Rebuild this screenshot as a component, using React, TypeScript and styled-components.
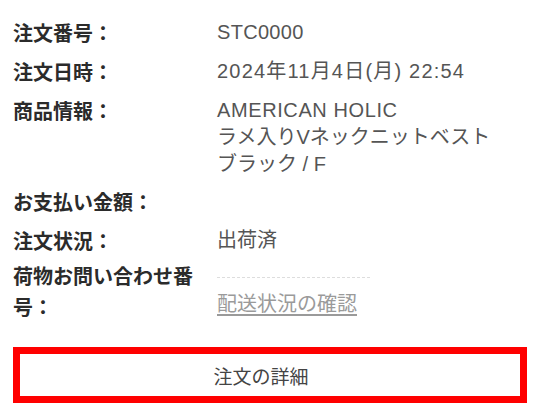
import * as React from "react";
import styled, { createGlobalStyle } from "styled-components";

const GlobalStyle = createGlobalStyle`
  html, body {
    margin: 0;
    padding: 0;
    background: #ffffff;
  }
  body {
    font-family: "Liberation Sans", "Noto Sans CJK JP", sans-serif;
  }
`;

interface LineData {
  text: string;
  spacing?: number;
}

interface Row {
  label: string;
  lines: LineData[];
}

const rows: Row[] = [
  { label: "注文番号：", lines: [{ text: "STC0000", spacing: 0.3 }] },
  { label: "注文日時：", lines: [{ text: "2024年11月4日(月) 22:54", spacing: 1.2 }] },
  {
    label: "商品情報：",
    lines: [
      { text: "AMERICAN HOLIC", spacing: 0.6 },
      { text: "ラメ入りVネックニットベスト" },
      { text: "ブラック / F" },
    ],
  },
  { label: "お支払い金額：", lines: [{ text: "" }] },
  { label: "注文状況：", lines: [{ text: "出荷済" }] },
];

const App: React.FC = () => {
  return (
    <>
      <GlobalStyle />
      <Page>
        <InfoList>
          {rows.map((row) => (
            <InfoRow key={row.label}>
              <Label>{row.label}</Label>
              <Value>
                {row.lines.map((line, i) => (
                  <Line key={i} $spacing={line.spacing ?? 0}>
                    {line.text}
                  </Line>
                ))}
              </Value>
            </InfoRow>
          ))}
          <InfoRow $pull={4}>
            <Label>荷物お問い合わせ番号：</Label>
            <Value>
              <Masked />
              <TrackLink href="#">配送状況の確認</TrackLink>
            </Value>
          </InfoRow>
        </InfoList>
        <DetailButton type="button">注文の詳細</DetailButton>
      </Page>
    </>
  );
};

export default App;

const Page = styled.div`
  width: 533px;
  height: 410px;
  box-sizing: border-box;
  padding: 17px 6px 0 13px;
  display: flex;
  flex-direction: column;
  overflow: hidden;
`;

const InfoList = styled.dl`
  margin: 0;
  display: flex;
  flex-direction: column;
  gap: 8px;
`;

const InfoRow = styled.div<{ $pull?: number }>`
  display: grid;
  grid-template-columns: 204px 1fr;
  align-items: start;
  margin-top: ${({ $pull }) => ($pull ? -$pull : 0)}px;
`;

const Label = styled.dt`
  margin: 0;
  width: 184px;
  font-size: 20px;
  line-height: 31px;
  font-weight: bold;
  color: #2b2b2b;
  font-family: "Noto Sans CJK JP", sans-serif;
`;

const Value = styled.dd`
  margin: 0;
  padding-top: 2px;
  display: flex;
  flex-direction: column;
  font-size: 20px;
  color: #555555;
`;

const Line = styled.span<{ $spacing: number }>`
  line-height: 27px;
  min-height: 27px;
  white-space: nowrap;
  letter-spacing: ${({ $spacing }) => $spacing}px;
`;

const Masked = styled.span`
  display: block;
  width: 153px;
  height: 0;
  margin: 15px 0 13px;
  border-top: 1px dashed #dddddd;
`;

const TrackLink = styled.a`
  font-size: 20px;
  line-height: 27px;
  color: #9a9a9a;
  text-decoration: underline;
  text-underline-offset: 3px;
`;

const DetailButton = styled.button`
  margin-top: 25px;
  width: 514px;
  height: 56px;
  box-sizing: border-box;
  border: 7px solid #ff0000;
  background: #ffffff;
  padding: 0 18px 0 0;
  font-family: "Liberation Sans", "Noto Sans CJK JP", sans-serif;
  font-size: 19px;
  color: #444444;
  cursor: pointer;
`;
